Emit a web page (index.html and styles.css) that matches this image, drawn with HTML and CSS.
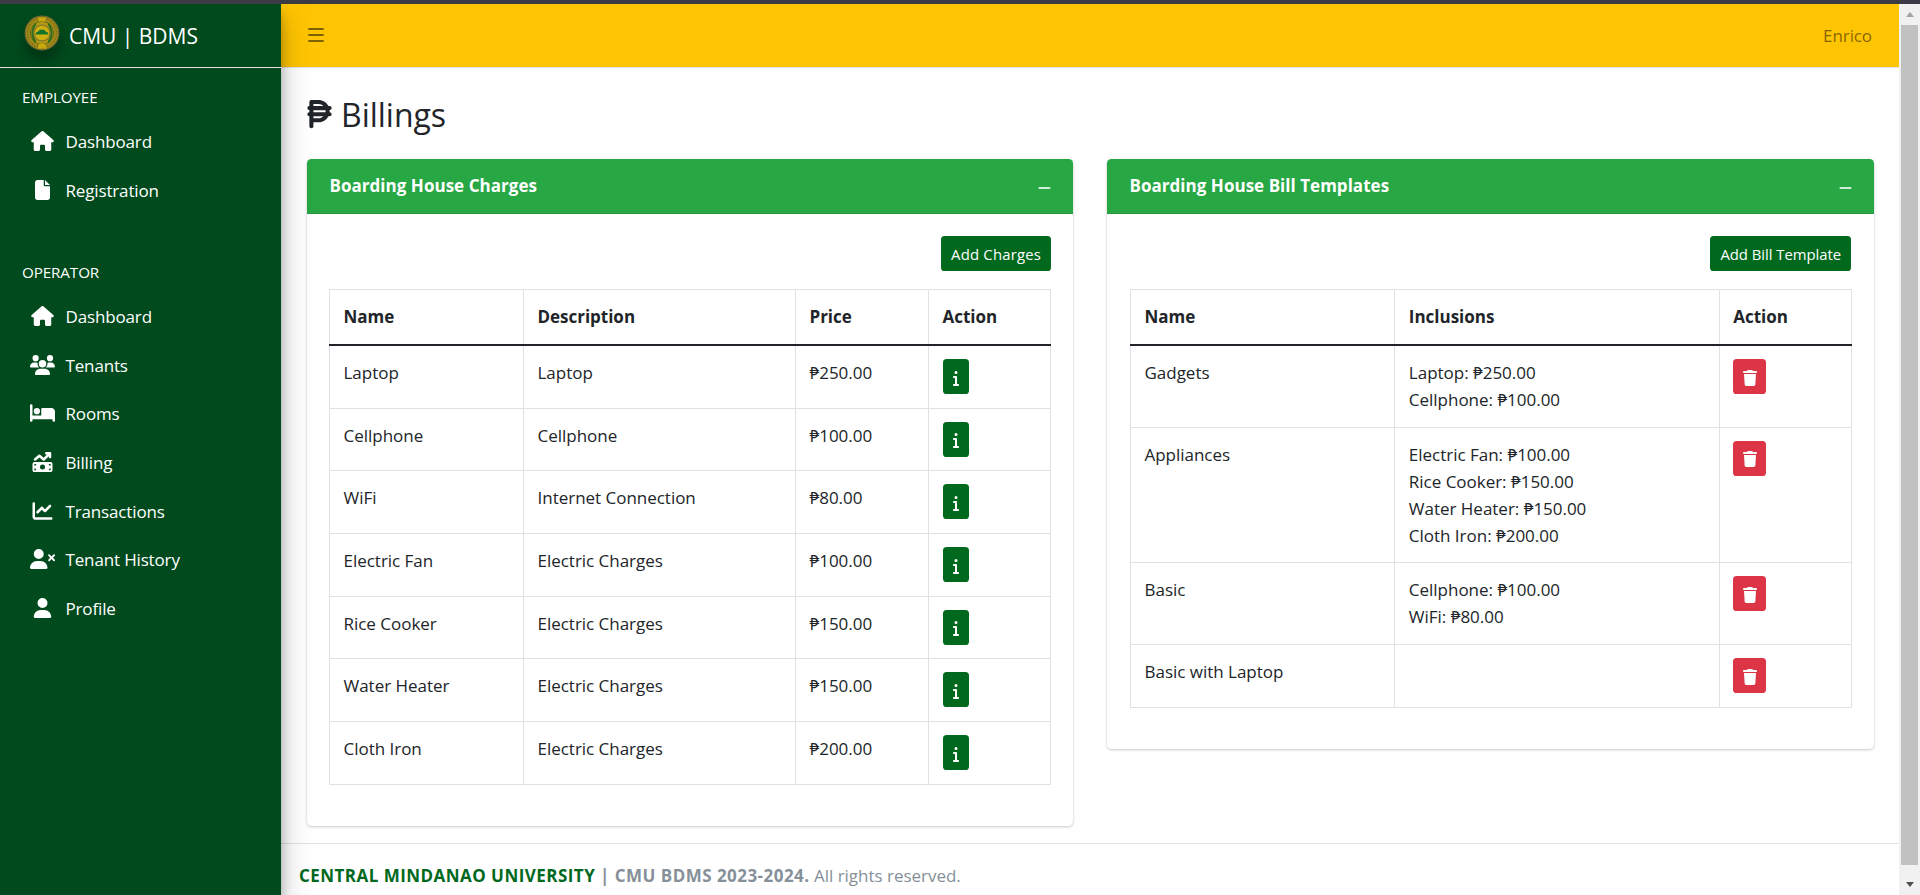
FILE: index.html
```html
<!DOCTYPE html>
<html lang="en">
<head>
<meta charset="utf-8">
<title>CMU | BDMS - Billings</title>
<link rel="stylesheet" href="styles.css">
</head>
<body>
<svg class="sprite" aria-hidden="true">
  <symbol id="house" viewBox="0 0 576 512"><path d="M575.8 255.5c0 18-15 32.1-32 32.1h-32l.7 160.2c0 2.7-.2 5.4-.5 8.1V472c0 22.1-17.9 40-40 40H456c-1.100 0-2.200 0-3.300-.1c-1.400 .1-2.800 .1-4.200 .1H416 392c-22.100 0-40-17.900-40-40V448 384c0-17.700-14.300-32-32-32H256c-17.700 0-32 14.300-32 32v64 24c0 22.100-17.900 40-40 40H160 128.100c-1.500 0-3-.1-4.500-.2c-1.200 .1-2.400 .2-3.600 .2H104c-22.100 0-40-17.900-40-40V360c0-.9 0-1.900 .1-2.800V287.600H32c-18 0-32-14-32-32.100c0-9 3-17 10-24L266.400 8c7-7 15-8 22-8s15 2 21 7L564.800 231.500c8 7 12 15 11 24z"/></symbol>
  <symbol id="file" viewBox="0 0 384 512"><path d="M0 64C0 28.7 28.7 0 64 0H224V128c0 17.7 14.3 32 32 32H384V448c0 35.3-28.7 64-64 64H64c-35.3 0-64-28.7-64-64V64zm384 64H256V0L384 128z"/></symbol>
  <symbol id="users" viewBox="0 0 640 512"><path d="M144 0a80 80 0 1 1 0 160A80 80 0 1 1 144 0zM512 0a80 80 0 1 1 0 160A80 80 0 1 1 512 0zM0 298.7C0 239.8 47.8 192 106.7 192h42.7c15.900 0 31 3.500 44.600 9.700c-1.300 7.200-1.900 14.700-1.900 22.300c0 38.200 16.800 72.500 43.300 96c-.2 0-.4 0-.7 0H21.300C9.600 320 0 310.400 0 298.700zM405.300 320c-.2 0-.4 0-.7 0c26.600-23.500 43.300-57.800 43.300-96c0-7.600-.7-15-1.900-22.300c13.600-6.300 28.700-9.700 44.600-9.700h42.700C592.200 192 640 239.800 640 298.700c0 11.800-9.600 21.300-21.300 21.300H405.300zM224 224a96 96 0 1 1 192 0 96 96 0 1 1-192 0zM128 485.300C128 411.700 187.700 352 261.300 352H378.700C452.300 352 512 411.700 512 485.300c0 14.700-11.900 26.700-26.700 26.700H154.700c-14.700 0-26.700-11.900-26.700-26.700z"/></symbol>
  <symbol id="bed" viewBox="0 0 640 512"><path d="M32 32c17.700 0 32 14.300 32 32V320H288V160c0-17.700 14.300-32 32-32H544c53 0 96 43 96 96V448c0 17.700-14.300 32-32 32s-32-14.300-32-32V416H352 320 64v32c0 17.700-14.300 32-32 32s-32-14.300-32-32V64C0 46.300 14.300 32 32 32zm144 96a80 80 0 1 1 0 160 80 80 0 1 1 0-160z"/></symbol>
  <symbol id="bill" viewBox="0 0 512 512"><path d="M470.700 9.400c3 3.100 5.300 6.600 6.900 10.300s2.400 7.800 2.400 12.200l0 .1v0 96c0 17.700-14.300 32-32 32s-32-14.300-32-32V109.300L310.600 214.600c-11.800 11.800-30.800 12.600-43.500 1.700L176 138.100 84.800 216.300c-13.400 11.500-33.600 9.900-45.100-3.500s-9.900-33.600 3.500-45.100l112-96c12-10.300 29.700-10.300 41.700 0l89.500 76.700L370.700 64H352c-17.700 0-32-14.300-32-32s14.300-32 32-32h96 0c8.800 0 16.800 3.600 22.600 9.300l.1 .1zM0 304c0-26.500 21.500-48 48-48H464c26.500 0 48 21.500 48 48V464c0 26.500-21.500 48-48 48H48c-26.500 0-48-21.500-48-48V304zM48 416v48H96c0-26.500-21.500-48-48-48zM96 304H48v48c26.500 0 48-21.500 48-48zM464 416c-26.500 0-48 21.500-48 48h48V416zM416 304c0 26.500 21.500 48 48 48V304H416zm-96 80a64 64 0 1 0 -128 0 64 64 0 1 0 128 0z"/></symbol>
  <symbol id="chart" viewBox="0 0 512 512"><path d="M64 64c0-17.700-14.300-32-32-32S0 46.300 0 64V400c0 44.200 35.800 80 80 80H480c17.700 0 32-14.300 32-32s-14.300-32-32-32H80c-8.800 0-16-7.200-16-16V64zm406.600 86.600c12.500-12.500 12.500-32.800 0-45.300s-32.800-12.500-45.300 0L320 210.700l-57.400-57.400c-12.500-12.500-32.800-12.500-45.300 0l-112 112c-12.500 12.500-12.500 32.800 0 45.300s32.800 12.500 45.300 0L240 221.300l57.400 57.400c12.500 12.500 32.800 12.500 45.300 0l128-128z"/></symbol>
  <symbol id="userx" viewBox="0 0 640 512"><path d="M96 128a128 128 0 1 1 256 0A128 128 0 1 1 96 128zM0 482.300C0 383.800 79.800 304 178.300 304h91.400C368.200 304 448 383.800 448 482.300c0 16.400-13.300 29.700-29.700 29.700H29.700C13.300 512 0 498.700 0 482.300zM471 143c9.400-9.400 24.600-9.400 33.900 0l47 47 47-47c9.400-9.400 24.600-9.400 33.900 0s9.400 24.600 0 33.900l-47 47 47 47c9.400 9.400 9.400 24.600 0 33.900s-24.600 9.400-33.900 0l-47-47-47 47c-9.400 9.400-24.600 9.400-33.900 0s-9.400-24.600 0-33.900l47-47-47-47c-9.400-9.400-9.400-24.600 0-33.900z"/></symbol>
  <symbol id="user" viewBox="0 0 448 512"><path d="M224 256A128 128 0 1 0 224 0a128 128 0 1 0 0 256zm-45.700 48C79.800 304 0 383.800 0 482.300C0 498.700 13.300 512 29.700 512H418.300c16.400 0 29.700-13.300 29.700-29.700C448 383.800 368.200 304 269.700 304H178.300z"/></symbol>
  <symbol id="peso" viewBox="0 0 384 512"><path d="M64 32C46.300 32 32 46.300 32 64v64c-17.700 0-32 14.300-32 32s14.300 32 32 32l0 32c-17.700 0-32 14.300-32 32s14.300 32 32 32l0 64v96c0 17.700 14.300 32 32 32s32-14.300 32-32V384h80c68.400 0 127.700-39 156.800-96H352c17.700 0 32-14.300 32-32s-14.300-32-32-32h-.7c.5-5.300 .7-10.600 .7-16s-.2-10.700-.7-16h.7c17.700 0 32-14.300 32-32s-14.300-32-32-32H332.800C303.700 71 244.400 32 176 32H64zm190.400 96H96V96h80c30.500 0 58.200 12.200 78.400 32zM96 192H286.900c.7 5.200 1.100 10.600 1.100 16s-.4 10.800-1.100 16H96V192zm158.400 96c-20.200 19.800-47.900 32-78.400 32H96V288H254.400z"/></symbol>
  <symbol id="bars" viewBox="0 0 16 14"><path d="M1 0h14a1 1 0 0 1 0 2H1a1 1 0 0 1 0-2zM1 6h14a1 1 0 0 1 0 2H1a1 1 0 0 1 0-2zM1 12h14a1 1 0 0 1 0 2H1a1 1 0 0 1 0-2z"/></symbol>
  <symbol id="minus" viewBox="0 0 448 512"><path d="M432 256c0 17.700-14.300 32-32 32H48c-17.700 0-32-14.300-32-32s14.300-32 32-32H400c17.700 0 32 14.300 32 32z"/></symbol>
  <symbol id="info" viewBox="0 0 192 512"><path d="M48 80a48 48 0 1 1 96 0A48 48 0 1 1 48 80zM0 224c0-17.700 14.300-32 32-32H96c17.700 0 32 14.300 32 32V448h32c17.700 0 32 14.300 32 32s-14.300 32-32 32H32c-17.700 0-32-14.300-32-32s14.300-32 32-32H64V256H32c-17.700 0-32-14.300-32-32z"/></symbol>
  <symbol id="trash" viewBox="0 0 448 512"><path d="M135.200 17.700L128 32H32C14.300 32 0 46.300 0 64S14.300 96 32 96H416c17.700 0 32-14.300 32-32s-14.300-32-32-32H320l-7.200-14.300C307.400 6.800 296.300 0 284.200 0H163.800c-12.100 0-23.200 6.800-28.600 17.700zM416 128H32L53.200 467c1.600 25.300 22.600 45 47.900 45H346.900c25.300 0 46.300-19.700 47.900-45L416 128z"/></symbol>
</svg>
<div class="window-edge"></div>
<div class="app">
  <aside class="sidebar">
    <a class="brand">
      <svg class="logo" viewBox="0 0 36 36">
        <circle cx="18" cy="18" r="16.800" fill="#a38a16" stroke="#75672f" stroke-width="1.200"/>
        <circle cx="18" cy="18" r="14.600" fill="none" stroke="#6f6a1c" stroke-width="1.600" stroke-dasharray="1.200 1.500"/>
        <circle cx="18" cy="18" r="11.600" fill="#b59a12" stroke="#5f661e" stroke-width="1"/>
        <path d="M11.500 8.500Q5.500 18 11.500 27.500M24.500 8.500Q30.500 18 24.500 27.500" fill="none" stroke="#2f6f1c" stroke-width="2.200"/>
        <path d="M14 2.500h8l-1 4h-6zM15 29h6l1.500 4.500h-9z" fill="#c9a80e"/>
        <circle cx="18" cy="18" r="8" fill="#cdb010" stroke="#8b7d2a" stroke-width="1.400"/>
        <path d="M11.500 19.500q0-2.500 2.500-2.700q1-2.300 4-2.300t4 2.300q2.500.2 2.500 2.700z" fill="#13742a"/>
      </svg>
      <span class="brand-text">CMU | BDMS</span>
    </a>
    <nav class="nav">
      <div class="nav-header">EMPLOYEE</div>
      <a class="nav-link"><svg><use href="#house"/></svg>Dashboard</a>
      <a class="nav-link"><svg><use href="#file"/></svg>Registration</a>
      <div class="nav-header nav-header-next">OPERATOR</div>
      <a class="nav-link"><svg><use href="#house"/></svg>Dashboard</a>
      <a class="nav-link"><svg><use href="#users"/></svg>Tenants</a>
      <a class="nav-link"><svg><use href="#bed"/></svg>Rooms</a>
      <a class="nav-link"><svg><use href="#bill"/></svg>Billing</a>
      <a class="nav-link"><svg><use href="#chart"/></svg>Transactions</a>
      <a class="nav-link"><svg><use href="#userx"/></svg>Tenant History</a>
      <a class="nav-link"><svg><use href="#user"/></svg>Profile</a>
    </nav>
  </aside>
  <div class="main">
    <header class="navbar"><svg class="bars"><use href="#bars"/></svg><span>Enrico</span></header>
    <h1 class="title"><svg><use href="#peso"/></svg>Billings</h1>
    <div class="cards">
      <section class="card">
        <div class="card-header"><h3>Boarding House Charges</h3><svg><use href="#minus"/></svg></div>
        <div class="card-body">
          <div class="tools"><button class="btn btn-charges">Add Charges</button></div>
          <table class="table">
            <colgroup><col class="c-name"><col class="c-desc"><col class="c-price"><col class="c-act"></colgroup>
            <thead><tr><th>Name</th><th>Description</th><th>Price</th><th>Action</th></tr></thead>
            <tbody>
              <tr><td>Laptop</td><td>Laptop</td><td><span class="peso">₱</span>250.00</td><td><button class="btn btn-info"><svg><use href="#info"/></svg></button></td></tr>
              <tr><td>Cellphone</td><td>Cellphone</td><td><span class="peso">₱</span>100.00</td><td><button class="btn btn-info"><svg><use href="#info"/></svg></button></td></tr>
              <tr><td>WiFi</td><td>Internet Connection</td><td><span class="peso">₱</span>80.00</td><td><button class="btn btn-info"><svg><use href="#info"/></svg></button></td></tr>
              <tr><td>Electric Fan</td><td>Electric Charges</td><td><span class="peso">₱</span>100.00</td><td><button class="btn btn-info"><svg><use href="#info"/></svg></button></td></tr>
              <tr><td>Rice Cooker</td><td>Electric Charges</td><td><span class="peso">₱</span>150.00</td><td><button class="btn btn-info"><svg><use href="#info"/></svg></button></td></tr>
              <tr><td>Water Heater</td><td>Electric Charges</td><td><span class="peso">₱</span>150.00</td><td><button class="btn btn-info"><svg><use href="#info"/></svg></button></td></tr>
              <tr><td>Cloth Iron</td><td>Electric Charges</td><td><span class="peso">₱</span>200.00</td><td><button class="btn btn-info"><svg><use href="#info"/></svg></button></td></tr>
            </tbody>
          </table>
        </div>
      </section>
      <section class="card card-templates">
        <div class="card-header"><h3>Boarding House Bill Templates</h3><svg><use href="#minus"/></svg></div>
        <div class="card-body">
          <div class="tools"><button class="btn">Add Bill Template</button></div>
          <table class="table">
            <colgroup><col class="t-name"><col class="t-inc"><col class="t-act"></colgroup>
            <thead><tr><th>Name</th><th>Inclusions</th><th>Action</th></tr></thead>
            <tbody>
              <tr><td>Gadgets</td><td>Laptop: <span class="peso">₱</span>250.00<br>Cellphone: <span class="peso">₱</span>100.00</td><td><button class="btn btn-danger"><svg><use href="#trash"/></svg></button></td></tr>
              <tr><td>Appliances</td><td>Electric Fan: <span class="peso">₱</span>100.00<br>Rice Cooker: <span class="peso">₱</span>150.00<br>Water Heater: <span class="peso">₱</span>150.00<br>Cloth Iron: <span class="peso">₱</span>200.00</td><td><button class="btn btn-danger"><svg><use href="#trash"/></svg></button></td></tr>
              <tr><td>Basic</td><td>Cellphone: <span class="peso">₱</span>100.00<br>WiFi: <span class="peso">₱</span>80.00</td><td><button class="btn btn-danger"><svg><use href="#trash"/></svg></button></td></tr>
              <tr><td>Basic with Laptop</td><td></td><td><button class="btn btn-danger"><svg><use href="#trash"/></svg></button></td></tr>
            </tbody>
          </table>
        </div>
      </section>
    </div>
    <footer class="footer"><strong><span class="univ">CENTRAL MINDANAO UNIVERSITY</span> | CMU BDMS 2023-2024.</strong> All rights reserved.</footer>
  </div>
  <div class="scrollbar"><i class="arrow up"></i><div class="thumb"></div><i class="arrow down"></i></div>
</div>
</body>
</html>
```
FILE: styles.css
```css
* { box-sizing: border-box; }
body {
  margin: 0;
  height: 895px;
  overflow: hidden;
  display: flex;
  flex-direction: column;
  background: #fff;
  color: #212529;
  font: 400 17px/27px "Open Sans", "Noto Sans", sans-serif;
  letter-spacing: -0.02px;
}
svg { fill: currentColor; }
.sprite { display: none; }
.window-edge { height: 4px; flex: none; background: #3b3b45; }
.app { flex: 1; min-height: 0; display: flex; }

.sidebar {
  flex: 0 0 281px;
  background: #004a1d;
  color: #fff;
  box-shadow: 0 14px 28px rgba(0,0,0,.25), 0 10px 10px rgba(0,0,0,.22);
  clip-path: inset(0 -60px 0 0);
  z-index: 1;
}
.brand {
  display: flex;
  align-items: center;
  gap: 9px;
  height: 64px;
  padding: 0 0 2px 24px;
  border-bottom: 1px solid #dee2e6;
  font-size: 21px;
}
.brand-text { padding-top: 3px; }
.logo {
  width: 36px;
  height: 36px;
  margin-top: -3px;
  border-radius: 50%;
  box-shadow: 0 9px 12px rgba(0,0,0,.3);
}
.nav { padding: 15px 9px 0; }
.nav-header { height: 36px; padding: 1px 0 0 13px; font-size: 15.2px; letter-spacing: -0.1px; }
.nav-header-next { margin-top: 44.600px; height: 37px; padding-top: 2px; }
.nav-link {
  display: flex;
  align-items: center;
  gap: 8.500px;
  height: 45px;
  margin-bottom: 3.6px;
  padding-left: 19px;
  letter-spacing: -0.15px;
}
.nav-link svg { width: 29px; height: 20px; margin-top: -1px; }

.main { flex: 1; min-width: 0; display: flex; flex-direction: column; }
.navbar {
  flex: none;
  display: flex;
  align-items: center;
  justify-content: space-between;
  height: 64px;
  padding: 0 27px 0 27px;
  background: #ffc503;
  border-bottom: 1px solid #dee2e6;
  color: rgba(0,0,0,.5);
  letter-spacing: -0.1px;
}
.bars { width: 16px; height: 14px; margin-top: -1px; }
.title {
  flex: none;
  display: flex;
  align-items: center;
  gap: 9px;
  height: 39px;
  margin: 27px 26px 25px;
  font-size: 32px;
  font-weight: 500;
}
.title svg { width: 25px; height: 32.4px; margin-top: -1px; }

.cards {
  flex: none;
  display: grid;
  grid-template-columns: 766px 767px;
  align-items: start;
  gap: 34px;
  padding: 0 25px 0 26px;
}
.card {
  border-radius: 4.500px;
  box-shadow: 0 0 1px rgba(0,0,0,.125), 0 1px 3px rgba(0,0,0,.2);
}
.card-header {
  display: flex;
  align-items: center;
  justify-content: space-between;
  height: 55px;
  padding: 0 22px 1px 22.500px;
  background: #28a745;
  border-bottom: 1px solid #249640;
  border-radius: 4.500px 4.500px 0 0;
  color: #fff;
}
.card-header h3 { margin: 0; font-size: 17px; font-weight: 700; letter-spacing: .03px; }
.card-header svg { width: 13px; height: 16px; margin-top: 4px; opacity: .8; }
.card-body { padding: 22px 22px 41px; }
.card-templates .card-body { padding-left: 23px; padding-right: 23px; }
.tools { display: flex; justify-content: flex-end; margin-bottom: 18px; }
.btn {
  display: flex;
  align-items: center;
  justify-content: center;
  height: 35px;
  padding: 1px 10px 0;
  border: 0;
  border-radius: 3.600px;
  background: #00691d;
  color: #fff;
  font: 400 14.900px/24px "Open Sans", sans-serif;
  letter-spacing: -0.05px;
}
.btn-charges { letter-spacing: .18px; }
.btn-info { width: 26px; padding: 2px 0 0; }
.btn-danger { width: 33px; padding: 2px 0 0; background: #dc3545; }
.btn svg { width: 14px; height: 16px; }

.table { width: 722px; table-layout: fixed; border-collapse: collapse; }
.c-name { width: 194px; }
.c-desc { width: 272px; }
.c-price { width: 133px; }
.c-act { width: 122px; }
.t-name { width: 264px; }
.t-inc { width: 324px; }
.t-act { width: 132px; }
.table th, .table td {
  padding: 13px 13.500px 13.700px;
  border: 1px solid #dee2e6;
  text-align: left;
  vertical-align: top;
}
.table th { padding: 13px 13.500px 14px; border-bottom: 2px solid #212529; font-weight: 700; }
.table td { height: 62.600px; }
.peso { font-family: "Noto Sans", "Open Sans", sans-serif; }

.footer {
  flex: none;
  height: 66px;
  margin-top: 17.500px;
  padding: 18px;
  border-top: 1px solid #dee2e6;
  color: #869099;
}
.footer strong { letter-spacing: .46px; }
.footer .univ { color: #00691d; }

.scrollbar {
  flex: 0 0 21px;
  display: flex;
  flex-direction: column;
  align-items: center;
  background: #f1f1f1;
}
.thumb { flex: 1; width: 17px; background: #c1c1c1; }
.arrow { height: 21px; width: 21px; display: flex; align-items: center; justify-content: center; }
.arrow::before { content: ""; border: 4.500px solid transparent; }
.up::before { border-top: 0; border-bottom: 5px solid #a3a3a3; }
.down { height: 30px; }
.down::before { border-bottom: 0; border-top: 5px solid #505050; margin-top: 8px; }
```
